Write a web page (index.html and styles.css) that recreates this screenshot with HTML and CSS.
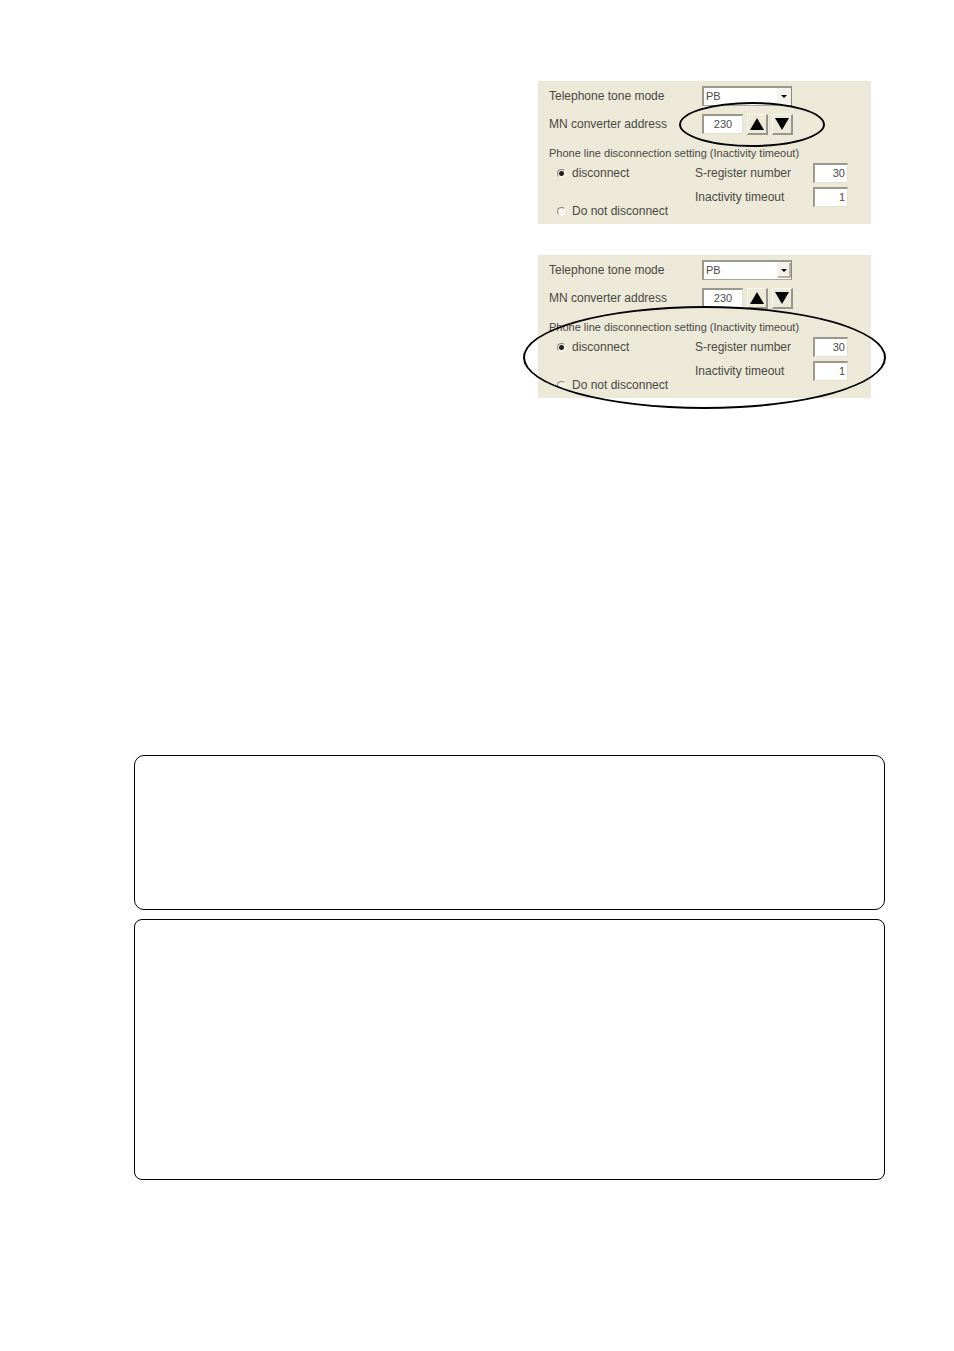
FILE: index.html
```html
<!DOCTYPE html>
<html lang="en">
<head>
  <meta charset="UTF-8">
  <meta name="viewport" content="width=device-width, initial-scale=1.0">
  <title>Telephone line settings</title>
  <link rel="stylesheet" href="styles.css">
</head>
<body>
  <main class="page">
    <div class="figures">
      <!-- MN converter address -->
      <form class="panel">
        <div class="row">
          <label for="tone1">Telephone tone mode</label>
          <div class="select-wrap">
            <select id="tone1"><option>PB</option></select>
            <svg class="caret" viewBox="0 0 14 16"><path d="M4 7H10L7 10Z"/></svg>
          </div>
        </div>
        <div class="row">
          <label for="address1">MN converter address</label>
          <input class="field address" type="text" id="address1" value="230">
          <button class="step" type="button" aria-label="Up"><svg viewBox="0 0 14 12"><path d="M7 0L14 12H0Z"/></svg></button>
          <button class="step" type="button" aria-label="Down"><svg viewBox="0 0 14 12"><path d="M0 0H14L7 12Z"/></svg></button>
        </div>
        <p class="heading">Phone line disconnection setting (Inactivity timeout)</p>
        <div class="options">
          <div class="radios">
            <label><input type="radio" name="line1" checked>disconnect</label>
            <label><input type="radio" name="line1">Do not disconnect</label>
          </div>
          <div class="values">
            <label for="register1">S-register number</label>
            <input class="field" type="text" id="register1" value="30">
            <label for="timeout1">Inactivity timeout</label>
            <input class="field" type="text" id="timeout1" value="1">
          </div>
        </div>
        <span class="ring ring-address"></span>
      </form>

      <!-- Line disconnection -->
      <form class="panel">
        <div class="row">
          <label for="tone2">Telephone tone mode</label>
          <div class="select-wrap">
            <select id="tone2"><option>PB</option></select>
            <svg class="caret" viewBox="0 0 14 16"><path d="M13 1V15H1" fill="none" stroke="#77746a"/><path d="M4 7H10L7 10Z"/></svg>
          </div>
        </div>
        <div class="row">
          <label for="address2">MN converter address</label>
          <input class="field address" type="text" id="address2" value="230">
          <button class="step" type="button" aria-label="Up"><svg viewBox="0 0 14 12"><path d="M7 0L14 12H0Z"/></svg></button>
          <button class="step" type="button" aria-label="Down"><svg viewBox="0 0 14 12"><path d="M0 0H14L7 12Z"/></svg></button>
        </div>
        <p class="heading">Phone line disconnection setting (Inactivity timeout)</p>
        <div class="options">
          <div class="radios">
            <label><input type="radio" name="line2" checked>disconnect</label>
            <label><input type="radio" name="line2">Do not disconnect</label>
          </div>
          <div class="values">
            <label for="register2">S-register number</label>
            <input class="field" type="text" id="register2" value="30">
            <label for="timeout2">Inactivity timeout</label>
            <input class="field" type="text" id="timeout2" value="1">
          </div>
        </div>
        <span class="ring ring-line"></span>
      </form>
    </div>

    <section class="note"></section>
    <section class="note note-large"></section>
  </main>
</body>
</html>
```

FILE: styles.css
```css
* {
  box-sizing: border-box;
}

body {
  margin: 0;
  background: #fff;
  font-family: "Liberation Sans", Arial, sans-serif;
  font-size: 12px;
  line-height: 20px;
  color: #4a4843;
}

.page {
  padding: 81px 69px 171px 134px;
}

.figures {
  display: flex;
  flex-direction: column;
  align-items: flex-end;
  gap: 31px;
  padding-right: 14px;
  margin-bottom: 357px;
}

.panel {
  position: relative;
  width: 333px;
  padding: 5px 23px 3px 11px;
  background: #ece9d8;
}

.row {
  display: flex;
  align-items: center;
  gap: 4px;
  height: 20px;
  margin-bottom: 8px;
}

.row > label {
  width: 149px;
}

.select-wrap {
  position: relative;
  width: 90px;
  height: 20px;
}

select,
.field {
  height: 20px;
  margin: 0;
  font-family: inherit;
  font-size: 11px;
  line-height: 14px;
  color: #4c4a48;
  background: #fff;
  border: 1px solid #e4e1d2;
  border-top: 2px solid #9b988e;
  border-left: 2px solid #9b988e;
  border-radius: 0;
}

select {
  appearance: none;
  display: block;
  width: 100%;
  padding: 0 2px 2px;
  border-right-color: #88857c;
  border-bottom-color: #aaa698;
}

.caret {
  position: absolute;
  top: 2px;
  right: 1px;
  width: 14px;
  height: 16px;
  background: #f4f2ea;
  pointer-events: none;
}

.field {
  width: 35px;
  padding: 0 2px 2px;
  text-align: right;
}

.address {
  width: 41px;
  text-align: center;
}

.step {
  display: flex;
  align-items: center;
  justify-content: center;
  width: 21px;
  height: 21px;
  padding: 0;
  background: #ece9d8;
  border: 1px solid #f8f6ee;
  border-right: 2px solid #98958a;
  border-bottom: 2px solid #98958a;
}

.step svg {
  width: 14px;
  height: 12px;
}

.heading {
  margin: 0;
  white-space: nowrap;
  font-size: 11px;
}

.row + .heading {
  margin-top: 9px;
}

.row:nth-of-type(2) {
  margin-bottom: 0;
}

.options {
  display: flex;
  justify-content: space-between;
}

.radios {
  display: flex;
  flex-direction: column;
  gap: 18px;
  padding-left: 8px;
}

.radios label {
  display: flex;
  align-items: center;
  gap: 6px;
}

.radios input {
  appearance: none;
  width: 9px;
  height: 9px;
  margin: 0;
  border: 1px solid #f8f6ee;
  border-top-color: #88857c;
  border-left-color: #88857c;
  border-radius: 50%;
  background: #f4f2ea;
}

.radios input:checked {
  background: radial-gradient(circle, #222 2px, #f4f2ea 3px);
}

.values {
  display: grid;
  grid-template-columns: 118px 35px;
  gap: 4px 0;
  align-content: start;
}

/* Callout ellipses over the panels */
.ring {
  position: absolute;
  border: 2px solid #000;
  border-radius: 50%;
  pointer-events: none;
}

.ring-address {
  top: 21px;
  left: 141px;
  width: 146px;
  height: 45px;
}

.ring-line {
  top: 51px;
  left: -15px;
  width: 363px;
  height: 103px;
}

.note {
  min-height: 155px;
  border: 1px solid #000;
  border-radius: 10px;
}

.note-large {
  min-height: 261px;
  margin-top: 9px;
  border-radius: 8px;
}
```
